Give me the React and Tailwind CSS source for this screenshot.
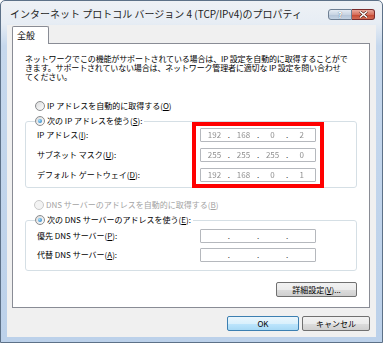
import React, { Fragment } from "react";

function Radio({ checked, disabled }) {
  return (
    <span
      className={
        disabled
          ? "inline-flex w-[10px] h-[10px] shrink-0 rounded-full border border-[#c9c9c9] bg-[#f3f3f3] items-center justify-center"
          : "inline-flex w-[10px] h-[10px] shrink-0 rounded-full border border-[#8a8c8e] bg-[linear-gradient(135deg,#d9dadb,#ffffff)] items-center justify-center"
      }
    >
      {checked && (
        <span className="block w-[4px] h-[4px] rounded-full bg-[radial-gradient(circle_at_35%_35%,#9fe0ff,#1c6fb8)]" />
      )}
    </span>
  );
}

function U({ children }) {
  return <span className="underline underline-offset-[1px]">{children}</span>;
}

function IpBox({ values }) {
  return (
    <div className="flex items-center h-[14px] w-[116px] border border-[#b5b8bd] rounded-[1px] bg-white text-[8px] leading-none">
      {[0, 1, 2, 3].map((i) => (
        <Fragment key={i}>
          <span className="flex-1 text-center text-[#8f8f8f] blur-[0.45px]">
            {values ? values[i] : ""}
          </span>
          {i < 3 && <span className="text-[#333]">.</span>}
        </Fragment>
      ))}
    </div>
  );
}

function Btn({ children, w, primary }) {
  return (
    <div
      className={
        primary
          ? "flex items-center justify-center h-[15px] rounded-[2px] border border-[#3c7fb1] bg-[linear-gradient(#eaf6fd_0%,#d9f0fc_50%,#bee6fd_50%,#a7d9f5_100%)] text-[8px] leading-none"
          : "flex items-center justify-center h-[15px] rounded-[2px] border border-[#707070] bg-[linear-gradient(#f2f2f2_0%,#ebebeb_50%,#dddddd_50%,#cfcfcf_100%)] text-[8px] leading-none"
      }
      style={{ width: w }}
    >
      {children}
    </div>
  );
}

export default function App() {
  return (
    <div className="w-[383px] h-[343px] flex flex-col border border-[#5d7188] rounded-t-[5px] overflow-hidden bg-[linear-gradient(to_bottom,#eef1f5_0px,#e7edf4_22px,#c6d8ed_45px,#bcd1ea_100%)] font-['Noto_Sans_CJK_JP',sans-serif] text-black">
      {/* title bar */}
      <div className="h-[24px] shrink-0 flex items-start">
        <div className="pl-[9px] pt-[6px] text-[10px] leading-[14px] text-[#1e1e1e] whitespace-nowrap">
          インターネット プロトコル バージョン 4 (TCP/IPv4)のプロパティ
        </div>
        <div className="ml-auto mr-[7px] mt-[8px] flex">
          <div className="w-[24px] h-[11px] rounded-l-[3px] border border-[#6e7f93] bg-[linear-gradient(#e4ebf3_0%,#c9d5e3_50%,#b3c3d6_50%,#c4d3e4_100%)] flex items-center justify-center text-[8px] font-bold leading-none text-white [text-shadow:0_0_1px_#33475e]">
            ?
          </div>
          <div className="w-[23px] h-[11px] rounded-r-[3px] border border-l-0 border-[#7a2b2b] bg-[linear-gradient(#e9a99c_0%,#d7705d_50%,#c4452f_50%,#d26b54_100%)] flex items-center justify-center">
            <svg width="9" height="7" viewBox="0 0 9 7">
              <path d="M1 0.5 L8 6.5 M8 0.5 L1 6.5" stroke="#4a1a12" strokeWidth="2.6" />
              <path d="M1 0.5 L8 6.5 M8 0.5 L1 6.5" stroke="#ffffff" strokeWidth="1.5" />
            </svg>
          </div>
        </div>
      </div>

      {/* client area */}
      <div className="ml-[6px] w-[369px] h-[312px] shrink-0 bg-[#f0f0f0] pl-[5px] pt-[1px] flex flex-col">
        <div className="relative z-10 -mb-[1px] w-[37px] h-[18px] bg-white border border-b-0 border-[#898c95] rounded-t-[2px] flex items-center pl-[4px] text-[9px] leading-none">
          全般
        </div>
        <div className="relative w-[358px] h-[265px] bg-white border border-[#898c95] px-[12px] pt-[10px] flex flex-col text-[8px]">
          <p className="leading-[9px] whitespace-nowrap tracking-[-0.15px]">
            ネットワークでこの機能がサポートされている場合は、IP 設定を自動的に取得することがで
            <br />
            きます。サポートされていない場合は、ネットワーク管理者に適切な IP 設定を問い合わせ
            <br />
            てください。
          </p>

          <div className="mt-[19px] h-[12px] flex items-center gap-[2px] pl-[10px] leading-none">
            <Radio />
            <span>
              IP アドレスを自動的に取得する(<U>O</U>)
            </span>
          </div>

          <fieldset className="mt-[3px] border border-[#d5dfe5] rounded-[3px] pl-[11px] pb-[5px]">
            <legend className="-ml-[2px] pr-[2px] h-[12px] flex items-center gap-[2px] leading-none">
              <Radio checked />
              <span>
                次の IP アドレスを使う(<U>S</U>):
              </span>
            </legend>
            <div className="mt-[1px] flex flex-col gap-[6px]">
              <div className="flex items-center h-[14px]">
                <span className="w-[163px]">
                  IP アドレス(<U>I</U>):
                </span>
                <IpBox values={["192", "168", "0", "2"]} />
              </div>
              <div className="flex items-center h-[14px]">
                <span className="w-[163px]">
                  サブネット マスク(<U>U</U>):
                </span>
                <IpBox values={["255", "255", "255", "0"]} />
              </div>
              <div className="flex items-center h-[14px]">
                <span className="w-[163px]">
                  デフォルト ゲートウェイ(<U>D</U>):
                </span>
                <IpBox values={["192", "168", "0", "1"]} />
              </div>
            </div>
          </fieldset>

          <div className="mt-[11px] h-[12px] flex items-center gap-[2px] pl-[9px] leading-none text-[#a3a3a3]">
            <Radio disabled />
            <span>
              DNS サーバーのアドレスを自動的に取得する(<U>B</U>)
            </span>
          </div>

          <fieldset className="mt-[3px] border border-[#d5dfe5] rounded-[3px] pl-[11px] pb-[8px]">
            <legend className="-ml-[2px] pr-[2px] h-[12px] flex items-center gap-[2px] leading-none">
              <Radio checked />
              <span>
                次の DNS サーバーのアドレスを使う(<U>E</U>):
              </span>
            </legend>
            <div className="mt-[3px] flex flex-col gap-[5px]">
              <div className="flex items-center h-[14px]">
                <span className="w-[163px]">
                  優先 DNS サーバー(<U>P</U>):
                </span>
                <IpBox />
              </div>
              <div className="flex items-center h-[14px]">
                <span className="w-[163px]">
                  代替 DNS サーバー(<U>A</U>):
                </span>
                <IpBox />
              </div>
            </div>
          </fieldset>

          <div className="mt-[11px] flex justify-end">
            <Btn w={81}>
              詳細設定(<U>V</U>)...
            </Btn>
          </div>

          {/* red annotation */}
          <div className="absolute left-[179px] top-[78px] w-[132px] h-[66px] border-[4px] border-[#ff0000] pointer-events-none" />
        </div>

        <div className="mt-[8px] w-[358px] flex justify-end gap-[3px]">
          <Btn w={72} primary>
            OK
          </Btn>
          <Btn w={68}>キャンセル</Btn>
        </div>
      </div>
    </div>
  );
}
